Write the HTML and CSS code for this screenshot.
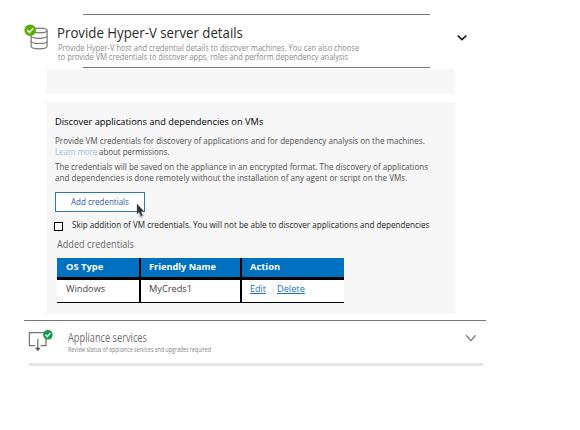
FILE: index.html
```html
<!DOCTYPE html>
<html lang="en">
<head>
<meta charset="utf-8">
<title>Provide Hyper-V server details</title>
<link rel="stylesheet" href="styles.css">
</head>
<body>
<main class="page">
  <header class="section-head">
    <svg class="server-icon" width="26" height="28" viewBox="0 0 26 28">
      <g fill="none" stroke="#777" stroke-width="1.2">
        <ellipse cx="11.1" cy="6.5" rx="8" ry="2.3"/>
        <path d="M3.1 6.5V22.3c0 1.4 3.5 2.5 8 2.5s8-1.1 8-2.5V6.5M3.1 11.8c0 1.4 3.5 2.5 8 2.5s8-1.1 8-2.5M3.1 17c0 1.4 3.5 2.5 8 2.5s8-1.1 8-2.5"/>
      </g>
      <circle cx="6.2" cy="6.2" r="5.8" fill="#57b100"/>
      <path d="M3.2 6.1l2.2 2.3 3.9-4.2" fill="none" stroke="#fff" stroke-width="1.5"/>
    </svg>
    <div class="head-body">
      <div class="rule"></div>
      <h1><span class="t-title">Provide Hyper-V server details</span></h1>
      <p class="sub"><span class="t-sub">Provide Hyper-V host and credential details to discover machines. You can also choose</span></p>
      <p class="sub"><span class="t-sub">to provide VM credentials to discover apps, roles and perform dependency analysis</span></p>
      <div class="rule rule-end"></div>
    </div>
    <svg class="chevron" width="12" height="8" viewBox="0 0 12 8"><path d="M1.6 1.5L6 5.7l4.4-4.2" fill="none" stroke="#111" stroke-width="1.6"/></svg>
  </header>
  <div class="strip"></div>
  <section class="panel">
    <h2><span class="t-heading">Discover applications and dependencies on VMs</span></h2>
    <p class="line"><span class="t-body">Provide VM credentials for discovery of applications and for dependency analysis on the machines.</span></p>
    <p class="line learn"><a class="t-learn">Learn more</a><span class="t-about">about permissions.</span></p>
    <p class="line para"><span class="t-body">The credentials will be saved on the appliance in an encrypted format. The discovery of applications</span></p>
    <p class="line"><span class="t-last">and dependencies is done remotely without the installation of any agent or script on the VMs.</span></p>
    <div class="button-wrap">
      <button class="add"><span class="t-add">Add credentials</span></button>
      <svg class="cursor" width="10" height="16" viewBox="0 0 10 16">
        <path d="M2 13.5l4 2 2-3-3-2z" fill="#bbb" opacity=".6"/>
        <path d="M1 .8v10.4l2.1-1.9 1.7 3.9 1.9-.9L5 8.6h3.1z" fill="#333" stroke="#888" stroke-width=".5"/>
      </svg>
    </div>
    <label class="skip"><span class="box"></span><span class="t-skip">Skip addition of VM credentials. You will not be able to discover applications and dependencies</span></label>
    <p class="added"><span class="t-added">Added credentials</span></p>
    <div class="table">
      <div class="row head">
        <div><span class="t-os">OS Type</span></div>
        <div><span class="t-name">Friendly Name</span></div>
        <div><span class="t-os">Action</span></div>
      </div>
      <div class="row">
        <div><span class="t-cell">Windows</span></div>
        <div><span class="t-cell">MyCreds1</span></div>
        <div><a class="t-edit">Edit</a><a class="t-cell">Delete</a></div>
      </div>
    </div>
  </section>
  <section class="services">
    <svg class="service-icon" width="26" height="25" viewBox="0 0 26 25">
      <path d="M7 16.7H1.4V3.6H18V16.7H12.6M9.8 10v11" fill="none" stroke="#777" stroke-width="1.3"/>
      <path d="M7 18.7h5.6l-2.8 3.6z" fill="#555"/>
      <circle cx="19.9" cy="5.8" r="4.8" fill="#119a4b"/>
      <path d="M17.5 5.8l1.7 1.8 3.1-3.5" fill="none" stroke="#fff" stroke-width="1.4"/>
    </svg>
    <div class="service-text">
      <h3><span class="t-service">Appliance services</span></h3>
      <p><span class="t-review">Review status of appliance services and upgrades required</span></p>
    </div>
    <svg class="service-chevron" width="12" height="9" viewBox="0 0 12 9"><path d="M1.2 1.2L5.9 6.6 10.6 1.2" fill="none" stroke="#777" stroke-width="1.3"/></svg>
  </section>
  <div class="end-rule"></div>
</main>
</body>
</html>
```
FILE: styles.css
```css
* { box-sizing: border-box; }
body { margin: 0; background: #fff; font-family: "Open Sans", "Noto Sans", sans-serif; }
h1, h2, h3, p { margin: 0; font-weight: 400; }
span, a { display: inline-block; white-space: nowrap; transform-origin: 0 50%; }
.page { width: 580px; height: 430px; padding-top: 14px; overflow: hidden; }

.section-head { display: flex; height: 55px; padding-left: 24px; }
.server-icon { flex: none; margin-top: 10px; overflow: visible; }
.server-icon g { transform: translateX(4px); }
.head-body { width: 380px; margin-left: 7px; }
.rule { height: 1px; width: 347px; margin-left: 26px; background: #777; }
.rule-end { margin-top: 5px; }
h1 { height: 29px; padding-top: 7px; font-size: 15px; line-height: 20px; color: #2b2b2b; }
.sub { display: flex; height: 9px; font-size: 8.8px; line-height: 9px; color: #8b8b8b; padding-left: 1px; }
.chevron { flex: none; margin: 20px 0 0 19px; }

.strip { width: 409px; height: 25px; margin-left: 46px; background: #f7f7f7; }
.panel { width: 409px; height: 212px; margin: 8px 0 0 46px; padding: 14px 0 0 9px; background: #f7f7f7; }
h2 { height: 19px; font-size: 9.5px; line-height: 12px; color: #000; }
.line { height: 11px; font-size: 9.8px; line-height: 12px; color: #505050; }
.learn { display: flex; }
.learn a { width: 44px; color: #9dbfe6; }
.para { margin-top: 4px; }
.button-wrap { position: relative; width: 90px; height: 20px; margin-top: 9px; }
.add { display: block; width: 90px; height: 20px; padding: 0 0 0 15px; border: 1px solid #2b78b0; background: #fff; font: 9.8px/16px "Open Sans", "Noto Sans", sans-serif; color: #2f5aa0; text-align: left; }
.cursor { position: absolute; left: 81px; top: 11px; }
.skip { display: flex; height: 25px; padding-top: 7px; font-size: 9.8px; line-height: 12px; color: #222; }
.box { flex: none; width: 9px; height: 9px; margin: 3px 8.5px 0 -1px; border: 1px solid #000; background: #fff; }
.added { height: 21px; padding-left: 2px; font-size: 10px; line-height: 14px; color: #686868; }

.table { width: 287px; height: 45px; margin-left: 2px; border-bottom: 1px solid #000; }
.row { display: grid; grid-template-columns: 84px 101px 102px; height: 22px; font-size: 9.5px; line-height: 18px; color: #444; background: #fff; }
.row > div { display: flex; padding-left: 9px; border-right: 2px solid #000; }
.row > div:nth-child(2) { padding-left: 8px; }
.row > div:last-child { border-right: 0; padding-left: 8px; }
.head { background: #0070c0; color: #fff; font-weight: 700; border-bottom: 3px solid #000; }
.row a { color: #1874b8; text-decoration: underline; text-underline-offset: 1px; }

.services { display: flex; width: 462px; height: 43px; margin: 6px 0 0 24px; padding-left: 4px; border-top: 1px solid #777; }
.service-icon { flex: none; margin-top: 8px; }
.service-text { flex: none; width: 395px; padding: 8px 0 0 14px; }
h3 { height: 16px; font-size: 11.8px; line-height: 16px; color: #707070; }
.service-text p { height: 10px; font-size: 6.5px; line-height: 10px; color: #858585; }
.service-chevron { flex: none; margin: 13px 0 0 16px; }
.end-rule { width: 454px; height: 3px; margin-left: 29px; background: #e6e6e6; }

.t-title { transform: scaleX(.883); }
.t-sub { transform: scaleX(.852); }
.t-heading { transform: scaleX(.979); }
.t-body { transform: scaleX(.823); }
.t-last { transform: scaleX(.826); }
.t-learn { transform: scaleX(.791); }
.t-about { transform: scaleX(.807); }
.t-add { transform: scaleX(.816); }
.t-skip { transform: scaleX(.828); }
.t-added { transform: scaleX(.914); }
.t-os { transform: scaleX(.985); }
.t-name { transform: scaleX(.965); }
.t-cell { transform: scaleX(.97); }
.t-edit { margin-right: 10px; transform: scaleX(.947); }
.t-service { transform: scaleX(.783); }
.t-review { transform: scaleX(.807); }
```
